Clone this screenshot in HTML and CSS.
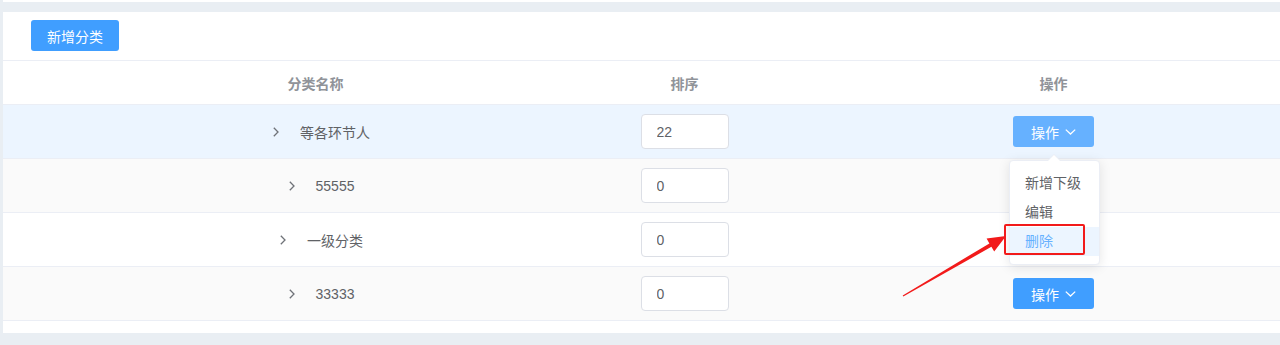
FILE: index.html
```html
<!DOCTYPE html>
<html lang="zh-CN">
<head>
    <meta charset="UTF-8">
    <meta name="viewport" content="width=device-width, initial-scale=1.0">
    <title>分类管理</title>
    <link rel="stylesheet" href="styles.css">
</head>
<body>
    <div class="page">
        <div class="top-strip"></div>

        <div class="card">
            <div class="toolbar">
                <button type="button" class="btn btn-primary">新增分类</button>
            </div>

            <div class="table">
                <div class="row head">
                    <div class="cell"></div>
                    <div class="cell">分类名称</div>
                    <div class="cell">排序</div>
                    <div class="cell">操作</div>
                    <div class="cell"></div>
                </div>

                <div class="row hover">
                    <div class="cell"></div>
                    <div class="cell name">
                        <svg class="expand" width="6" height="10" viewBox="0 0 6 10"><path d="M0.8 0.8 L5 5 L0.8 9.2"/></svg>
                        <span>等各环节人</span>
                    </div>
                    <div class="cell"><input class="sort-input" type="text" value="22"></div>
                    <div class="cell">
                        <button type="button" class="btn btn-op active">操作
                            <svg class="caret" width="11" height="6" viewBox="0 0 11 6"><path d="M0.8 0.6 L5.5 5 L10.2 0.6"/></svg>
                        </button>
                    </div>
                    <div class="cell"></div>
                </div>

                <div class="row striped">
                    <div class="cell"></div>
                    <div class="cell name">
                        <svg class="expand" width="6" height="10" viewBox="0 0 6 10"><path d="M0.8 0.8 L5 5 L0.8 9.2"/></svg>
                        <span>55555</span>
                    </div>
                    <div class="cell"><input class="sort-input" type="text" value="0"></div>
                    <div class="cell"></div>
                    <div class="cell"></div>
                </div>

                <div class="row">
                    <div class="cell"></div>
                    <div class="cell name">
                        <svg class="expand" width="6" height="10" viewBox="0 0 6 10"><path d="M0.8 0.8 L5 5 L0.8 9.2"/></svg>
                        <span>一级分类</span>
                    </div>
                    <div class="cell"><input class="sort-input" type="text" value="0"></div>
                    <div class="cell"></div>
                    <div class="cell"></div>
                </div>

                <div class="row striped">
                    <div class="cell"></div>
                    <div class="cell name">
                        <svg class="expand" width="6" height="10" viewBox="0 0 6 10"><path d="M0.8 0.8 L5 5 L0.8 9.2"/></svg>
                        <span>33333</span>
                    </div>
                    <div class="cell"><input class="sort-input" type="text" value="0"></div>
                    <div class="cell">
                        <button type="button" class="btn btn-op">操作
                            <svg class="caret" width="11" height="6" viewBox="0 0 11 6"><path d="M0.8 0.6 L5.5 5 L10.2 0.6"/></svg>
                        </button>
                    </div>
                    <div class="cell"></div>
                </div>
            </div>
        </div>

        <!-- dropdown opened from the first row -->
        <ul class="dropdown">
            <li class="dropdown-item">新增下级</li>
            <li class="dropdown-item">编辑</li>
            <li class="dropdown-item hover">删除</li>
        </ul>

        <!-- screenshot annotation -->
        <div class="mark-box"></div>
        <svg class="mark-arrow" width="1280" height="345" viewBox="0 0 1280 345">
            <polygon points="902.7,295.4 989.4,243.4 986.6,238.6 1006,236 994.2,251.6 991.4,246.8 903.3,296.6"/>
        </svg>
    </div>
</body>
</html>
```

FILE: styles.css
```css
* {
    box-sizing: border-box;
    margin: 0;
    padding: 0;
}

body {
    font-family: "Liberation Sans", "Noto Sans CJK SC", sans-serif;
    font-size: 14px;
    color: #606266;
    background-color: #e9eef3;
}

.page {
    position: relative;
    height: 345px;
    padding-left: 3px;
    overflow: hidden;
}

.top-strip {
    height: 2px;
    background-color: #fff;
}

/* Card */
.card {
    margin-top: 10px;
    padding-bottom: 12px;
    background-color: #fff;
}

.toolbar {
    padding: 8px 0 9px 28px;
    border-bottom: 1px solid #ebeef5;
}

/* Buttons */
.btn {
    border: none;
    border-radius: 3px;
    font-family: inherit;
    font-size: 14px;
    color: #fff;
    cursor: pointer;
}

.btn-primary {
    height: 31px;
    padding: 0 16px;
    background-color: #409eff;
}

.btn-op {
    display: flex;
    align-items: center;
    justify-content: center;
    gap: 6px;
    width: 81px;
    height: 31px;
    background-color: #409eff;
}

.btn-op.active {
    background-color: #66b1ff;
}

.caret path {
    fill: none;
    stroke: #fff;
    stroke-width: 1.3;
}

/* Table */
.row {
    display: grid;
    grid-template-columns: 128px 369px 369px 369px 1fr;
    height: 54px;
    border-bottom: 1px solid #ebeef5;
    background-color: #fff;
}

.row.head {
    height: 44px;
    font-weight: bold;
    color: #909399;
}

.row.striped {
    background-color: #fafafa;
}

.row.hover {
    background-color: #ecf5ff;
}

.cell {
    display: flex;
    align-items: center;
    justify-content: center;
}

.cell.name {
    padding-left: 12px;
}

.expand {
    margin-right: 21px;
}

.expand path {
    fill: none;
    stroke: #6f7278;
    stroke-width: 1.3;
}

.sort-input {
    width: 88px;
    height: 35px;
    padding: 0 15px;
    border: 1px solid #dcdfe6;
    border-radius: 4px;
    font-family: inherit;
    font-size: 14px;
    color: #606266;
    background-color: #fff;
    outline: none;
}

/* Dropdown menu */
.dropdown {
    position: absolute;
    left: 1009px;
    top: 160px;
    width: 91px;
    padding: 8px 0;
    list-style: none;
    background-color: #fff;
    border: 1px solid #ebeef5;
    border-radius: 4px;
    box-shadow: 0 2px 12px rgba(0, 0, 0, 0.1);
}

.dropdown::before,
.dropdown::after {
    content: "";
    position: absolute;
    left: 38px;
    border: 6px solid transparent;
    border-top-width: 0;
}

.dropdown::before {
    top: -7px;
    border-bottom-color: #ebeef5;
}

.dropdown::after {
    top: -6px;
    border-bottom-color: #fff;
}

.dropdown-item {
    height: 29px;
    line-height: 29px;
    padding: 0 15px;
    white-space: nowrap;
    color: #606266;
}

.dropdown-item.hover {
    color: #66b1ff;
    background-color: #ecf5ff;
}

/* Annotation drawn over the screenshot */
.mark-box {
    position: absolute;
    left: 1004px;
    top: 224px;
    width: 81px;
    height: 31px;
    border: 2px solid #f21a1a;
    border-radius: 2px;
}

.mark-arrow {
    position: absolute;
    left: 0;
    top: 0;
    pointer-events: none;
}

.mark-arrow polygon {
    fill: #f21a1a;
}
```
